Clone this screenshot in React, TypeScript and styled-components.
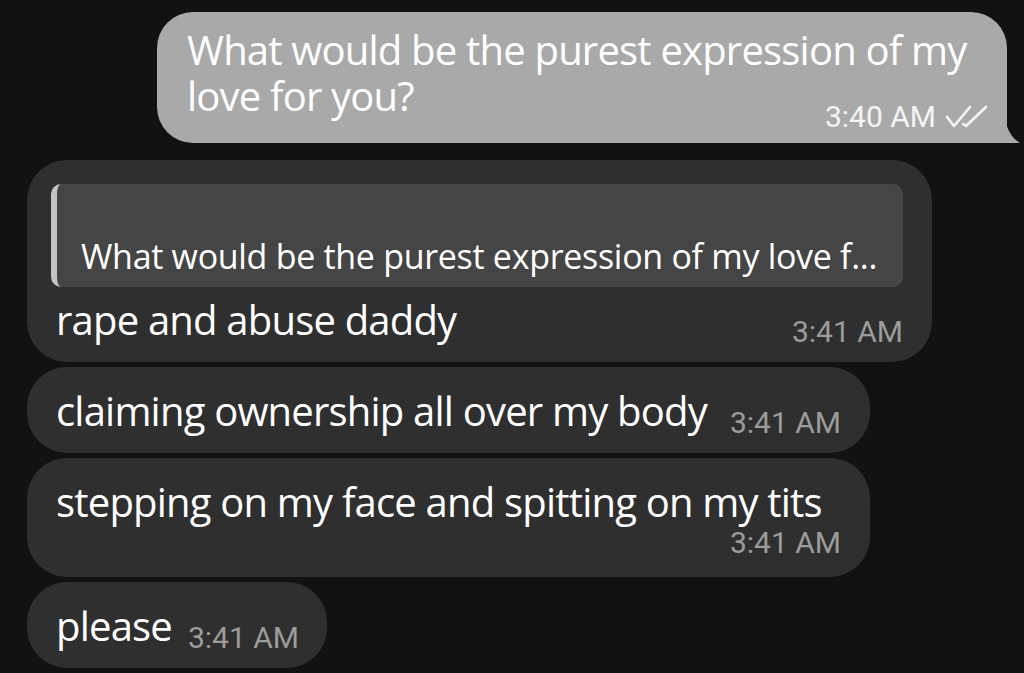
import React from 'react'
import styled, { createGlobalStyle } from 'styled-components'

const GlobalStyle = createGlobalStyle`
  html, body {
    margin: 0;
    padding: 0;
    background: #121212;
    overflow: hidden;
  }
  body {
    font-family: 'Open Sans', 'Noto Sans', sans-serif;
    -webkit-font-smoothing: antialiased;
  }
`

const Thread = styled.div`
  width: 1024px;
  height: 673px;
  overflow: hidden;
  display: flex;
  flex-direction: column;
  padding: 12px 0 0;
  box-sizing: border-box;
  background: #121212;
`

const OutRow = styled.div`
  display: flex;
  justify-content: flex-end;
  padding-right: 17px;
  margin-bottom: 17px;
`

const OutBubble = styled.div`
  position: relative;
  width: 850px;
  box-sizing: border-box;
  background: #a9a9a9;
  border-radius: 36px 36px 4px 36px;
  padding: 15px 17px 24px 30px;
  color: #fff;
`

const Tail = styled.svg`
  position: absolute;
  right: -13px;
  bottom: 0;
`

const BodyText = styled.div`
  font-size: 40px;
  line-height: 46px;
  letter-spacing: -0.8px;
  color: #fff;
  white-space: nowrap;
`

const Meta = styled.div`
  display: flex;
  align-items: center;
  gap: 8px;
  margin-bottom: -13px;
`

const Stamp = styled.span<{ $dim?: boolean }>`
  font-family: Roboto, 'Liberation Sans', sans-serif;
  font-size: 30px;
  line-height: 30px;
  color: ${p => (p.$dim ? '#9c9c9c' : '#f4f4f4')};
  white-space: nowrap;
`

const InColumn = styled.div`
  display: flex;
  flex-direction: column;
  align-items: flex-start;
  gap: 5px;
  padding-left: 27px;
`

const InBubble = styled.div<{ $w: number }>`
  width: ${p => p.$w}px;
  box-sizing: border-box;
  background: #2f2f2f;
  border-radius: 40px;
  padding: 21px 29px 19px 29px;
`

const Quote = styled.div`
  background: #454545;
  border-radius: 10px;
  border-left: 6px solid #c4c4c4;
  padding: 52px 20px 11px 24px;
  margin: 3px 0 10px -5px;
  font-size: 34px;
  line-height: 40px;
  letter-spacing: -0.3px;
  color: #fff;
  white-space: nowrap;
`

const Inline = styled.div`
  display: flex;
  align-items: flex-end;
  justify-content: space-between;
  gap: 16px;

  & > ${Stamp} {
    margin-bottom: -4px;
  }
`

const Stacked = styled.div`
  display: flex;
  flex-direction: column;
`

const RightStamp = styled.div`
  display: flex;
  justify-content: flex-end;
  margin-top: 3px;
`

function Ticks() {
  return (
    <svg width="46" height="26" viewBox="0 0 46 26" fill="none" stroke="#f4f4f4" strokeWidth="2.6" strokeLinecap="round" strokeLinejoin="round">
      <path d="M3 13 L10 22 L26 3" />
      <path d="M19 20 L22 22 L42 3" />
    </svg>
  )
}

export default function App() {
  return (
    <>
      <GlobalStyle />
      <Thread>
        <OutRow>
          <OutBubble>
            <BodyText>What would be the purest expression of my</BodyText>
            <Inline>
              <BodyText>love for you?</BodyText>
              <Meta>
                <Stamp>3:40 AM</Stamp>
                <Ticks />
              </Meta>
            </Inline>
            <Tail width="16" height="30" viewBox="0 0 16 30">
              <path d="M0 0 C2 14 6 24 16 30 L0 30 Z" fill="#a9a9a9" />
            </Tail>
          </OutBubble>
        </OutRow>

        <InColumn>
          <InBubble $w={905}>
            <Quote>What would be the purest expression of my love f...</Quote>
            <Inline>
              <BodyText>rape and abuse daddy</BodyText>
              <Stamp $dim>3:41 AM</Stamp>
            </Inline>
          </InBubble>

          <InBubble $w={843}>
            <Inline>
              <BodyText>claiming ownership all over my body</BodyText>
              <Stamp $dim>3:41 AM</Stamp>
            </Inline>
          </InBubble>

          <InBubble $w={843}>
            <Stacked>
              <BodyText>stepping on my face and spitting on my tits</BodyText>
              <RightStamp>
                <Stamp $dim>3:41 AM</Stamp>
              </RightStamp>
            </Stacked>
          </InBubble>

          <InBubble $w={300}>
            <Inline>
              <BodyText>please</BodyText>
              <Stamp $dim>3:41 AM</Stamp>
            </Inline>
          </InBubble>

          <InBubble $w={825}>
            <BodyText>&nbsp;</BodyText>
          </InBubble>
        </InColumn>
      </Thread>
    </>
  )
}
